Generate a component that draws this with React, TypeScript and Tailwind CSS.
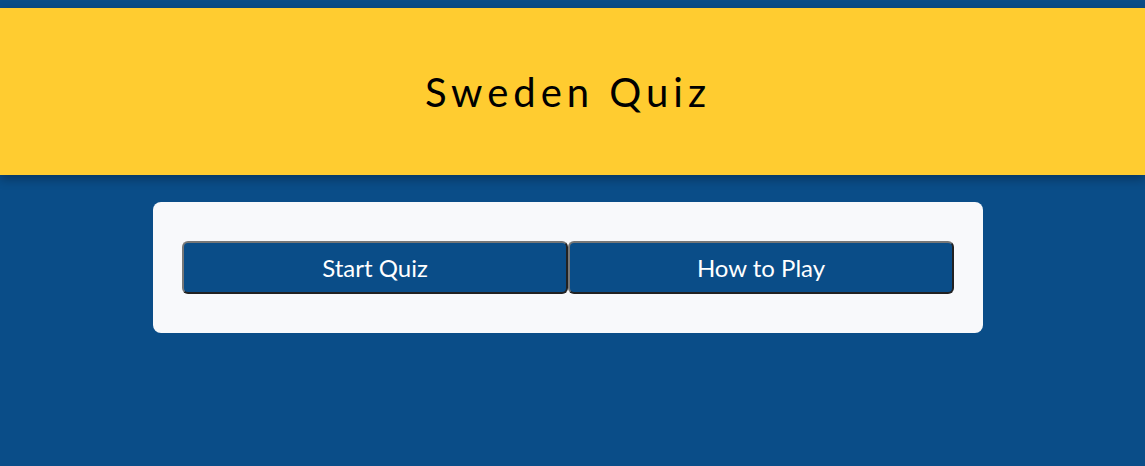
export default function App() {
  return (
    <div className="min-h-screen bg-[#0a4d88] pt-2 font-['Lato','Open_Sans',sans-serif]">
      <header className="flex h-[167px] items-center justify-center bg-[#ffcc30] pr-[9px] shadow-[0_4px_10px_rgba(0,0,0,0.3)]">
        <h1 className="text-[40px] font-normal tracking-[5px] text-black">Sweden Quiz</h1>
      </header>
      <main className="flex justify-center pt-[27px] pr-[9px]">
        <div className="flex w-[830px] rounded-lg bg-[#f8f9fb] px-[29px] py-[39px]">
          <button
            type="button"
            className="h-[53px] flex-1 rounded-md border-2 border-t-[#777] border-l-[#777] border-b-[#222] border-r-[#222] bg-[#0a4d88] text-[24px] text-white"
          >
            Start Quiz
          </button>
          <button
            type="button"
            className="h-[53px] flex-1 rounded-md border-2 border-t-[#777] border-l-[#777] border-b-[#222] border-r-[#222] bg-[#0a4d88] text-[24px] text-white"
          >
            How to Play
          </button>
        </div>
      </main>
    </div>
  );
}
